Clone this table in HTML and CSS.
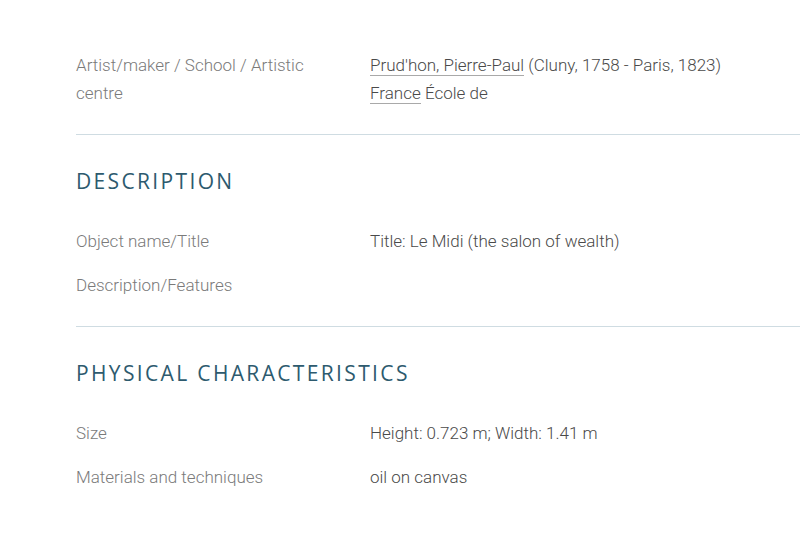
FILE: index.html
```html
<!DOCTYPE html>
<html>
<head>
<meta charset="utf-8">
<link rel="stylesheet" href="styles.css">
</head>
<body>
<div class="page">
  <section class="section first">
    <div class="row">
      <div class="label">Artist/maker / School / Artistic centre</div>
      <div class="value"><a class="link" href="#">Prud'hon, Pierre-Paul</a> (Cluny, 1758 - Paris, 1823)<br><a class="link" href="#">France</a> École de</div>
    </div>
  </section>
  <section class="section">
    <h2 class="heading">DESCRIPTION</h2>
    <div class="row">
      <div class="label">Object name/Title</div>
      <div class="value">Title: Le Midi (the salon of wealth)</div>
    </div>
    <div class="row">
      <div class="label">Description/Features</div>
      <div class="value"></div>
    </div>
  </section>
  <section class="section last">
    <h2 class="heading">PHYSICAL CHARACTERISTICS</h2>
    <div class="row">
      <div class="label">Size</div>
      <div class="value">Height: 0.723 m; Width: 1.41 m</div>
    </div>
    <div class="row">
      <div class="label">Materials and techniques</div>
      <div class="value">oil on canvas</div>
    </div>
  </section>
</div>
</body>
</html>
```
FILE: styles.css
```css
html, body {
  margin: 0;
  padding: 0;
  background: #ffffff;
}
body {
  font-family: Roboto, "Liberation Sans", sans-serif;
  font-weight: 300;
  font-size: 17px;
  line-height: 28px;
}
.page {
  padding: 51px 0 0 76px;
}
.section {
  border-bottom: 1px solid #cfdce2;
  padding-bottom: 11px;
  padding-top: 31px;
}
.section.first {
  padding-top: 0;
  padding-bottom: 11px;
}
.section.last {
  border-bottom: none;
}
.heading {
  margin: 0 0 31px 0;
  font-family: "Open Sans", Lato, sans-serif;
  font-weight: 400;
  font-size: 21px;
  line-height: 30px;
  letter-spacing: 2.35px;
  color: #2d5a6e;
}
.row {
  display: flex;
  margin-bottom: 16px;
}
.label {
  width: 228px;
  margin-right: 66px;
  flex-shrink: 0;
  color: #7a7a7a;
}
.value {
  color: #4a4a4a;
}
.link {
  color: #4a4a4a;
  text-decoration: none;
  border-bottom: 1px solid #a9a9a9;
}
```
